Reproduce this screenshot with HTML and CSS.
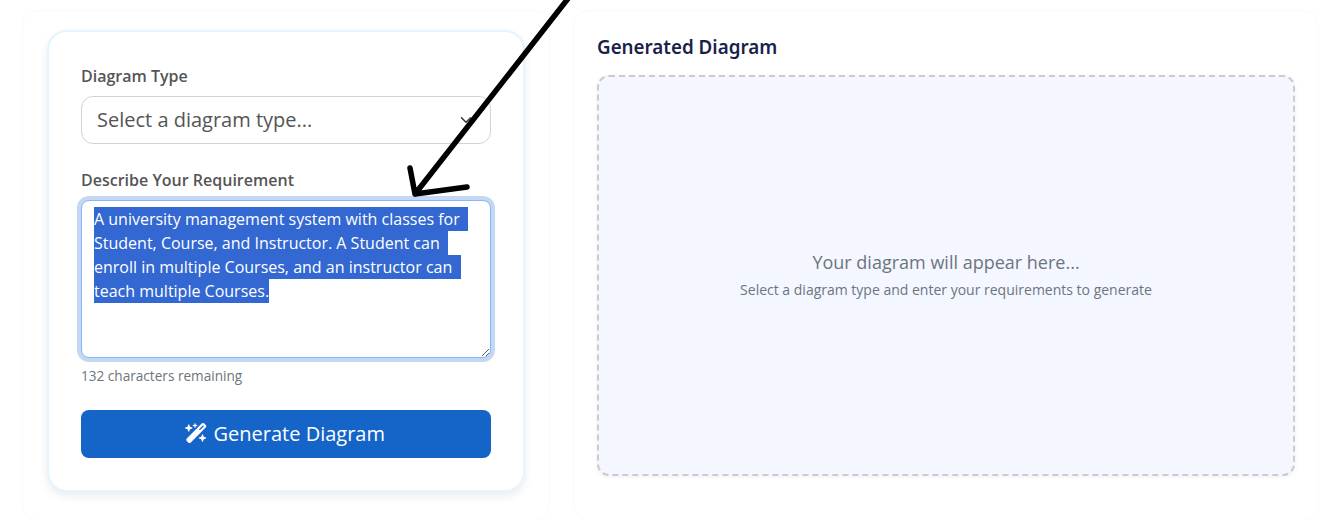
FILE: index.html
```html
<!DOCTYPE html>
<html lang="en">
<head>
  <meta charset="UTF-8">
  <meta name="viewport" content="width=device-width, initial-scale=1.0">
  <title>Generate Diagram</title>
  <link rel="stylesheet" href="styles.css">
</head>
<body>
  <main class="page">
    <!-- input side -->
    <section class="panel panel-left">
      <form class="form-card">
        <div class="field">
          <label for="diagramType">Diagram Type</label>
          <select id="diagramType" class="select">
            <option>Select a diagram type...</option>
            <option>Class Diagram</option>
            <option>Sequence Diagram</option>
          </select>
        </div>
        <div class="field">
          <label for="requirement">Describe Your Requirement</label>
          <textarea id="requirement" class="textarea">A university management system with classes for Student, Course, and Instructor. A Student can enroll in multiple Courses, and an instructor can teach multiple Courses.</textarea>
          <div class="hint">132 characters remaining</div>
        </div>
        <button type="button" class="btn-generate">
          <svg class="wand" viewBox="0 0 576 512" aria-hidden="true"><path fill="currentColor" d="M234.7 42.7L197 56.8c-3 1.1-5 4-5 7.2s2 6.1 5 7.2l37.7 14.1L248.8 123c1.1 3 4 5 7.2 5s6.1-2 7.2-5l14.1-37.7L315 71.2c3-1.1 5-4 5-7.2s-2-6.1-5-7.2L277.3 42.7 263.2 5c-1.1-3-4-5-7.2-5s-6.1 2-7.2 5L234.7 42.7zM46.1 395.4c-18.7 18.7-18.7 49.1 0 67.9l34.6 34.6c18.7 18.7 49.1 18.7 67.9 0L529.9 116.5c18.7-18.7 18.7-49.1 0-67.9L495.3 14.1c-18.7-18.7-49.1-18.7-67.9 0L46.1 395.4zM484.6 82.6l-105 105-23.3-23.3 105-105 23.3 23.3zM7.5 117.2C3 118.9 0 123.2 0 128s3 9.1 7.5 10.8L64 160l21.2 56.5c1.7 4.5 6 7.5 10.8 7.5s9.1-3 10.8-7.5L128 160l56.5-21.2c4.5-1.7 7.5-6 7.5-10.8s-3-9.1-7.5-10.8L128 96 106.8 39.5C105.1 35 100.8 32 96 32s-9.1 3-10.8 7.5L64 96 7.5 117.2zm352 256c-4.5 1.7-7.5 6-7.5 10.8s3 9.1 7.5 10.8L416 416l21.2 56.5c1.7 4.5 6 7.5 10.8 7.5s9.1-3 10.8-7.5L480 416l56.5-21.2c4.5-1.7 7.5-6 7.5-10.8s-3-9.1-7.5-10.8L480 352l-21.2-56.5c-1.7-4.5-6-7.5-10.8-7.5s-9.1 3-10.8 7.5L416 352l-56.5 21.2z"/></svg>
          Generate Diagram
        </button>
      </form>
    </section>

    <!-- output side -->
    <section class="panel panel-right">
      <h2 class="panel-title">Generated Diagram</h2>
      <div class="placeholder">
        <p class="placeholder-main">Your diagram will appear here...</p>
        <p class="placeholder-sub">Select a diagram type and enter your requirements to generate</p>
      </div>
    </section>
  </main>

  <!-- hand drawn arrow on top of the screenshot -->
  <svg class="arrow" width="600" height="210" viewBox="0 0 600 210" aria-hidden="true">
    <path d="M570 -4L415 194M410 168L415 194L467 187" fill="none" stroke="#000" stroke-width="5.5" stroke-linecap="round" stroke-linejoin="round"/>
  </svg>

  <script src="select.js"></script>
</body>
</html>
```

FILE: styles.css
```css
* {
  box-sizing: border-box;
}

html, body {
  margin: 0;
  height: 519px;
  overflow: hidden;
  background: #fff;
}

body {
  font-family: "Open Sans", "Noto Sans", sans-serif;
  color: #555;
  position: relative;
}

.page {
  display: flex;
  gap: 23px;
  padding: 10px 17px 0 22px;
}

.panel {
  height: 510px;
  background: #fff;
  border: 1px solid #fafafb;
  border-radius: 16px;
}

.panel-left {
  width: 528px;
  padding: 19px 24px;
}

.panel-right {
  width: 746px;
  padding: 24px 23px;
}

.form-card {
  height: 462px;
  padding: 32px;
  background: #fff;
  border: 2px solid #e3f5fe;
  border-radius: 20px;
  box-shadow: 0 4px 10px rgba(0, 0, 0, 0.08);
}

.field {
  margin-bottom: 24px;
}

label {
  display: block;
  font-size: 16px;
  font-weight: 600;
  line-height: 24px;
  margin-bottom: 8px;
  color: #555;
}

.select {
  display: block;
  width: 100%;
  height: 48px;
  padding: 0 40px 2px 15px;
  font-family: inherit;
  font-size: 20px;
  color: #555;
  background: #fff url("data:image/svg+xml,%3Csvg xmlns='http://www.w3.org/2000/svg' viewBox='0 0 16 16'%3E%3Cpath fill='none' stroke='%23343a40' stroke-linecap='round' stroke-linejoin='round' stroke-width='2' d='M2 5l6 6 6-6'/%3E%3C/svg%3E") no-repeat right 16px center / 16px 12px;
  border: 1px solid #ced4da;
  border-radius: 12px;
  appearance: none;
}

.textarea {
  display: block;
  width: 100%;
  height: 158px;
  padding: 6px 12px;
  font-family: inherit;
  font-size: 16px;
  line-height: 24px;
  color: #212529;
  background: #fff;
  border: 1px solid #86b7fe;
  border-radius: 8px;
  outline: none;
  box-shadow: 0 0 0 4px rgba(19, 100, 200, 0.25);
  resize: vertical;
}

.textarea::selection {
  color: #fff;
  background: #3367d1;
}

.hint {
  margin-top: 8px;
  font-size: 13.6px;
  line-height: 20px;
  color: #6c757d;
}

.btn-generate {
  display: flex;
  align-items: center;
  justify-content: center;
  gap: 6px;
  width: 100%;
  height: 48px;
  padding: 0 2px 2px 0;
  font-family: inherit;
  font-size: 20px;
  color: #fff;
  background: #1565c8;
  border: none;
  border-radius: 8px;
}

.wand {
  width: 22.5px;
  height: 20px;
}

.panel-title {
  margin: 0 0 16px;
  font-family: "Noto Sans", sans-serif;
  font-size: 18.8px;
  font-weight: 600;
  line-height: 24px;
  color: #1a1f4b;
}

.placeholder {
  display: flex;
  flex-direction: column;
  align-items: center;
  justify-content: center;
  height: 401px;
  padding-bottom: 3px;
  background: #f4f7ff;
  border: 2px dashed #cccccc;
  border-radius: 12px;
  box-shadow: 0 1px 4px rgba(0, 0, 0, 0.06);
}

.placeholder-main {
  margin: 0 0 3px;
  font-size: 18px;
  line-height: 27px;
  color: #6c757d;
}

.placeholder-sub {
  margin: 0;
  font-size: 14px;
  line-height: 21px;
  color: #6c757d;
}

.arrow {
  position: absolute;
  left: 0;
  top: 0;
  pointer-events: none;
}
```

FILE: select.js
```js
// the text is shown selected
var box = document.getElementById('requirement');
box.focus();
box.select();
```
